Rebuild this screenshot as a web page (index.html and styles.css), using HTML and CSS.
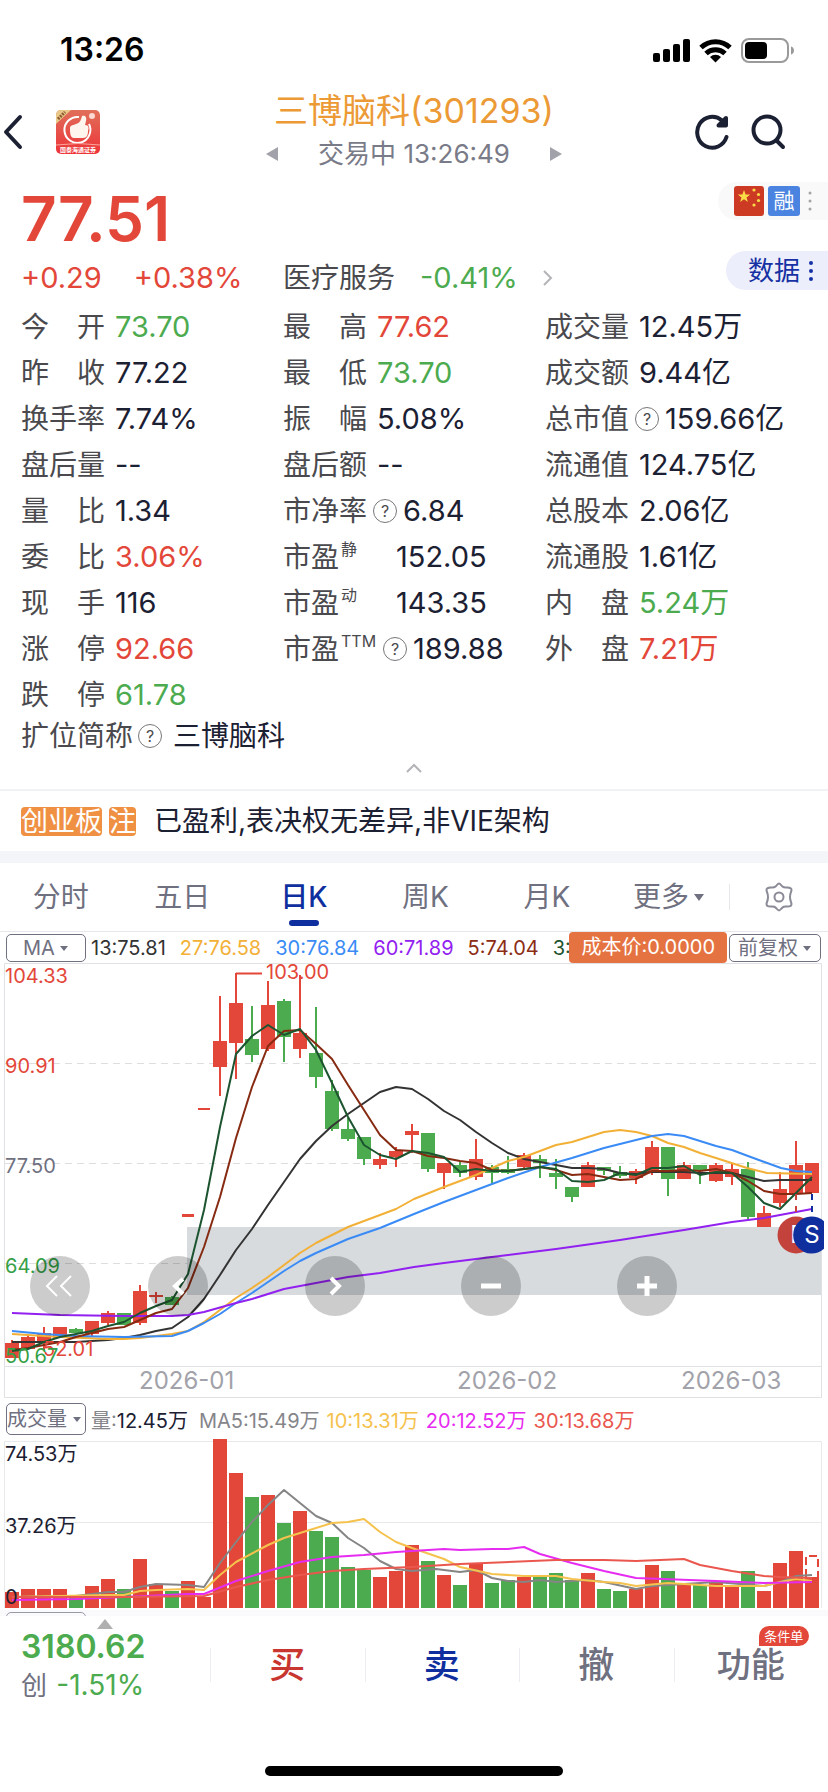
FILE: index.html
```
<!DOCTYPE html>
<html lang="zh-CN">
<head>
    <meta charset="UTF-8">
    <meta name="viewport" content="width=device-width, initial-scale=1.0">
    <title>三博脑科(301293)</title>
    <link rel="stylesheet" href="styles.css">
</head>
<body>
    <div class="status-bar">
        <span class="status-time">13:26</span>
        <svg class="status-icons" width="142" height="28" viewBox="0 0 142 28">
            <rect x="0" y="17" width="7" height="9" rx="2"/>
            <rect x="10" y="13" width="7" height="13" rx="2"/>
            <rect x="20" y="8" width="7" height="18" rx="2"/>
            <rect x="30" y="3" width="7" height="23" rx="2"/>
            <g fill="none" stroke="#000" stroke-width="5">
                <path d="M48 11.500a21 21 0 0 1 29 0"/>
                <path d="M53 17.500a14 14 0 0 1 19 0"/>
            </g>
            <path d="M57 21a8 8 0 0 1 11 0l-5.500 5.500z"/>
            <rect x="89" y="3" width="46" height="23" rx="7" fill="none" stroke="#9a9a9a" stroke-width="2"/>
            <rect x="92" y="6" width="22" height="17" rx="4"/>
            <path d="M138 10.500c4 1 4 7 0 8z" fill="#9a9a9a"/>
        </svg>
    </div>

    <header class="header">
        <div class="header-side">
            <button class="icon-btn" aria-label="返回">
                <svg width="24" height="36" viewBox="0 0 24 36" fill="none" stroke="#1c2033" stroke-width="4" stroke-linecap="round" stroke-linejoin="round"><path d="M20 3 6 18l14 15"/></svg>
            </button>
            <svg class="app-icon" width="44" height="44" viewBox="0 0 44 44">
                <defs>
                    <linearGradient id="appRed" x1="0" y1="0" x2="0" y2="1">
                        <stop offset="0" stop-color="#e0705a"/>
                        <stop offset="1" stop-color="#ee3338"/>
                    </linearGradient>
                    <clipPath id="appClip"><rect width="44" height="44" rx="5"/></clipPath>
                </defs>
                <g clip-path="url(#appClip)">
                    <rect width="44" height="44" fill="url(#appRed)"/>
                    <path d="M0 0h15L0 14z" fill="#e9c888"/>
                    <path d="M2 9 9 2" stroke="#8a5a30" stroke-width="3" stroke-dasharray="2 1"/>
                    <path d="M23 7a13 13 0 1 0 10 7" fill="none" stroke="#fff" stroke-width="2"/>
                    <path d="M14 18c0-3 4-3 6-4 4-1 5-4 6-8 3-1 5 1 4 5l-1 4c4 0 4 3 3 6 0 4-1 7-5 7h-9c-4 0-4-6-4-10z" fill="#fff6ee"/>
                    <circle cx="36" cy="6" r="3" fill="#fbd9d0"/>
                    <path d="M0 35q22-3 44 0" fill="none" stroke="#f9a79c" stroke-width="1"/>
                    <text x="22" y="42" text-anchor="middle" class="app-name">国泰海通证券</text>
                </g>
            </svg>
        </div>
        <div class="header-title">
            <h1>三博脑科(301293)</h1>
            <div class="header-state">
                <button class="icon-btn" aria-label="上一只"><svg width="12" height="14" viewBox="0 0 12 14" fill="#a2a2aa"><path d="M12 0v14L0 7z"/></svg></button>
                <span>交易中 13:26:49</span>
                <button class="icon-btn" aria-label="下一只"><svg width="12" height="14" viewBox="0 0 12 14" fill="#a2a2aa"><path d="M0 0v14l12-7z"/></svg></button>
            </div>
        </div>
        <div class="header-side header-actions">
            <button class="icon-btn" aria-label="刷新">
                <svg width="36" height="38" viewBox="0 0 36 38" fill="none" stroke="#1c2033" stroke-width="4" stroke-linecap="round" stroke-linejoin="round">
                    <path d="M32.500 24A15 15.500 0 1 1 28 7.500"/><path d="M32 5v7.500h-7.500z" fill="#1c2033"/>
                </svg>
            </button>
            <button class="icon-btn" aria-label="搜索">
                <svg width="36" height="38" viewBox="0 0 36 38" fill="none" stroke="#1c2033" stroke-width="4" stroke-linecap="round">
                    <circle cx="17" cy="17" r="13.500"/><path d="m27 28 6 6"/>
                </svg>
            </button>
        </div>
    </header>

    <section class="quote">
        <div class="quote-main">
            <div class="price">77.51</div>
            <div class="change-row">
                <div class="change"><span>+0.29</span><span>+0.38%</span></div>
                <a class="sector" href="#">
                    <span>医疗服务</span>
                    <span class="sector-change down">-0.41%</span>
                    <svg width="10" height="18" viewBox="0 0 10 18" fill="none" stroke="#b4b4b8" stroke-width="2"><path d="m1 2 7 7-7 7"/></svg>
                </a>
            </div>
        </div>
        <div class="quote-side">
            <div class="tag-pill">
                <svg width="30" height="30" viewBox="0 0 30 30">
                    <rect width="30" height="30" rx="3" fill="#cc3a24"/>
                    <g fill="#fbdc46">
                        <path d="m10 4 1.600 4.600h4.600l-3.700 2.800 1.400 4.500-3.900-2.700-3.900 2.700 1.400-4.500-3.700-2.800h4.600z"/>
                        <circle cx="20" cy="4" r="1.600"/><circle cx="24.500" cy="8.500" r="1.600"/><circle cx="24.500" cy="14.500" r="1.600"/><circle cx="20" cy="19" r="1.600"/>
                    </g>
                </svg>
                <span class="tag-rong">融</span>
                <svg width="4" height="22" viewBox="0 0 4 22" fill="#a5a5a8"><circle cx="2" cy="3" r="1.500"/><circle cx="2" cy="11" r="1.500"/><circle cx="2" cy="19" r="1.500"/></svg>
            </div>
            <button class="data-pill">数据
                <svg width="6" height="22" viewBox="0 0 6 22" fill="#1531a3"><circle cx="3" cy="3" r="2"/><circle cx="3" cy="11" r="2"/><circle cx="3" cy="19" r="2"/></svg>
            </button>
        </div>
    </section>

    <dl class="stats">
        <div><dt>今开</dt><dd class="down">73.70</dd></div>
        <div><dt>最高</dt><dd class="up">77.62</dd></div>
        <div><dt>成交量</dt><dd>12.45万</dd></div>

        <div><dt>昨收</dt><dd>77.22</dd></div>
        <div><dt>最低</dt><dd class="down">73.70</dd></div>
        <div><dt>成交额</dt><dd>9.44亿</dd></div>

        <div><dt>换手率</dt><dd>7.74%</dd></div>
        <div><dt>振幅</dt><dd>5.08%</dd></div>
        <div class="tight"><dt>总市值</dt><dd><i class="help">?</i>159.66亿</dd></div>

        <div><dt>盘后量</dt><dd>--</dd></div>
        <div><dt>盘后额</dt><dd>--</dd></div>
        <div><dt>流通值</dt><dd>124.75亿</dd></div>

        <div><dt>量比</dt><dd>1.34</dd></div>
        <div class="tight"><dt>市净率</dt><dd><i class="help">?</i>6.84</dd></div>
        <div><dt>总股本</dt><dd>2.06亿</dd></div>

        <div><dt>委比</dt><dd class="up">3.06%</dd></div>
        <div class="pe"><dt>市盈<sup>静</sup></dt><dd>152.05</dd></div>
        <div><dt>流通股</dt><dd>1.61亿</dd></div>

        <div><dt>现手</dt><dd>116</dd></div>
        <div class="pe"><dt>市盈<sup>动</sup></dt><dd>143.35</dd></div>
        <div><dt>内盘</dt><dd class="down">5.24万</dd></div>

        <div><dt>涨停</dt><dd class="up">92.66</dd></div>
        <div class="tight pe-ttm"><dt>市盈<sup>TTM</sup></dt><dd><i class="help">?</i>189.88</dd></div>
        <div><dt>外盘</dt><dd class="up">7.21万</dd></div>

        <div><dt>跌停</dt><dd class="down">61.78</dd></div>
    </dl>
    <div class="full-name">扩位简称<i class="help">?</i><span>三博脑科</span></div>
    <button class="collapse" aria-label="收起">
        <svg width="16" height="10" viewBox="0 0 16 10" fill="none" stroke="#b4b4b8" stroke-width="2"><path d="m1 9 7-7 7 7"/></svg>
    </button>

    <div class="notice">
        <span class="notice-tag">创业板</span>
        <span class="notice-tag">注</span>
        <span class="notice-text">已盈利,表决权无差异,非VIE架构</span>
    </div>

    <nav class="tabs">
        <button>分时</button>
        <button>五日</button>
        <button class="active">日K</button>
        <button>周K</button>
        <button>月K</button>
        <button class="more">更多<svg width="10" height="7" viewBox="0 0 10 7" fill="#6f7080"><path d="M0 0h10L5 7z"/></svg></button>
        <button class="tab-settings" aria-label="设置">
            <svg width="32" height="32" viewBox="0 0 32 32" fill="none" stroke="#8a8b96" stroke-width="2" stroke-linejoin="round">
                <path d="M12.500 5.500C14 4 15 2.500 16 2.500s2 1.500 3.500 3 3 1 5 1 4 1 4 2.500-1.500 3-1.500 7 1.500 5.500 1.500 7-2 2.500-4 2.500-3.500-.5-5 1-2.500 3-3.500 3-2-1.500-3.500-3-3-1-5-1-4-1-4-2.500S5 20 5 16s-1.500-5.500-1.500-7 2-2.500 4-2.500 3.500.5 5-1z"/>
                <circle cx="16" cy="16" r="4.500"/>
            </svg>
        </button>
    </nav>

    <div class="ma-bar">
        <label class="picker"><select aria-label="主图指标"><option>MA</option></select></label>
        <div class="ma-values">
            <span class="ma13">13:75.81</span>
            <span class="ma27">27:76.58</span>
            <span class="ma30">30:76.84</span>
            <span class="ma60">60:71.89</span>
            <span class="ma5">5:74.04</span>
            <span class="ma3">3:</span>
        </div>
        <span class="cost">成本价:0.0000</span>
        <label class="picker picker-adjust"><select aria-label="复权方式"><option>前复权</option></select></label>
    </div>
    <div class="chart">
        <svg id="kline" viewBox="0 963 828 437"></svg>
        <div class="chart-controls">
            <button class="ctl-first" aria-label="最前"><svg viewBox="0 0 60 60" stroke-width="2"><path d="M27 20 17 30l10 10M41 20 31 30l10 10"/></svg></button>
            <button class="ctl-prev" aria-label="左移"><svg viewBox="0 0 60 60" stroke-width="4"><path d="m35 23-8 7 8 8"/></svg></button>
            <button class="ctl-next" aria-label="右移"><svg viewBox="0 0 60 60" stroke-width="4"><path d="m26 22 8 8-8 8"/></svg></button>
            <button class="ctl-out" aria-label="缩小"><svg viewBox="0 0 60 60" stroke-width="5"><path d="M20 30h20"/></svg></button>
            <button class="ctl-in" aria-label="放大"><svg viewBox="0 0 60 60" stroke-width="5"><path d="M20 30h20M30 20v20"/></svg></button>
        </div>
    </div>

    <div class="vol-bar">
        <label class="picker picker-vol"><select aria-label="副图指标"><option>成交量</option></select></label>
        <div class="vol-values">
            <span class="vol-now"><span>量:</span>12.45万</span>
            <span class="vol5">MA5:15.49万</span>
            <span class="vol10">10:13.31万</span>
            <span class="vol20">20:12.52万</span>
            <span class="vol30">30:13.68万</span>
        </div>
    </div>
    <svg id="volume" viewBox="0 1438 828 172"></svg>
    <div class="next-panel"><div class="next-picker"></div></div>

    <footer class="trade-bar">
        <a class="index" href="#">
            <svg class="index-arrow" width="16" height="10" viewBox="0 0 16 10" fill="#b0b0b0"><path d="M8 0l8 10H0z"/></svg>
            <strong>3180.62</strong>
            <span>创 <em>-1.51%</em></span>
        </a>
        <button class="buy">买</button>
        <button class="sell">卖</button>
        <button class="cancel">撤</button>
        <button class="tools"><span>功能<i class="badge">条件单</i></span></button>
    </footer>
    <div class="home-indicator"></div>

    <script src="chart.js"></script>
</body>
</html>
```
FILE: styles.css
```
* {
    margin: 0;
    padding: 0;
    box-sizing: border-box;
}

:root {
    --up: #e34739;
    --down: #4dab4f;
    --ink: #1c2033;
    --label: #4a4a4e;
    --muted: #6f7080;
    --blue: #0f2f9f;
    --line: #e6e7ea;
    --band: #f4f5f9;
}

body {
    font-family: Inter, "Noto Sans CJK SC", sans-serif;
    font-size: 28px;
    line-height: 46px;
    color: var(--ink);
    background: #fff;
    overflow-x: hidden;
}

button,
select {
    font: inherit;
    color: inherit;
    background: none;
    border: none;
    cursor: pointer;
}

a {
    color: inherit;
    text-decoration: none;
}

i,
em {
    font-style: normal;
}

svg {
    flex: none;
}

.up {
    color: var(--up);
}

.down {
    color: var(--down);
}

.status-bar {
    display: flex;
    justify-content: space-between;
    align-items: center;
    height: 88px;
    padding: 12px 33px 0 60px;
    color: #000;
}

.status-time {
    font-size: 32px;
    font-weight: 600;
}

.header {
    display: flex;
    align-items: center;
    height: 88px;
}

.header-side {
    flex: 1 1 30%;
    display: flex;
    align-items: center;
    gap: 32px;
}

.header-actions {
    justify-content: flex-end;
    gap: 20px;
    padding-right: 42px;
}

.icon-btn {
    display: flex;
}

.app-name {
    font-size: 6px;
    font-weight: 700;
    fill: #fff;
}

.header-title h1 {
    font-size: 34px;
    font-weight: 400;
    line-height: 44px;
    color: #ec9a35;
    text-align: center;
}

.header-state {
    display: flex;
    align-items: center;
    gap: 40px;
    font-size: 26px;
    line-height: 42px;
    color: #7a7b88;
}

.quote {
    display: flex;
    justify-content: space-between;
}

.quote-main {
    flex: 1;
    padding: 14px 0 0 21px;
    margin-right: -110px;
}

.price {
    font-size: 62px;
    font-weight: 600;
    line-height: 58px;
    color: var(--up);
}

.change-row {
    display: flex;
    align-items: center;
    line-height: 48px;
    margin: 6px 0 2px;
}

.change {
    display: flex;
    gap: 32px;
    width: 262px;
    font-size: 29px;
    color: var(--up);
}

.sector {
    display: flex;
    align-items: center;
    gap: 25px;
    color: var(--label);
}

.sector-change {
    font-size: 29px;
}

.quote-side {
    display: flex;
    flex-direction: column;
    align-items: flex-end;
    gap: 31px;
    padding-top: 6px;
}

.tag-pill {
    display: flex;
    align-items: center;
    gap: 4px;
    width: 110px;
    height: 38px;
    padding-left: 16px;
    border-radius: 19px 0 0 19px;
    background: #f9f9fa;
}

.tag-rong {
    width: 32px;
    margin-right: 4px;
    border-radius: 3px;
    background: #4a84e0;
    color: #fff;
    font-size: 21px;
    line-height: 30px;
    text-align: center;
}

.data-pill {
    display: flex;
    align-items: center;
    gap: 8px;
    width: 102px;
    height: 39px;
    padding-left: 22px;
    border-radius: 20px 0 0 20px;
    background: #eceefb;
    color: #1531a3;
    font-size: 26px;
}

.stats {
    display: grid;
    grid-template-columns: 262fr 262fr 283fr;
    padding-left: 21px;
}

.stats div {
    display: flex;
    gap: 10px;
    height: 46px;
    white-space: nowrap;
}

.stats .tight {
    gap: 6px;
}

.stats dt {
    width: 84px;
    color: var(--label);
    text-align-last: justify;
}

.stats .pe dt {
    width: 103px;
    text-align-last: left;
}

.stats .pe-ttm dt {
    width: 94px;
    text-align-last: left;
}

.stats dd {
    display: flex;
    align-items: center;
    font-size: 29px;
}

.stats sup {
    margin-left: 2px;
    font-size: 16px;
    line-height: 16px;
    vertical-align: 12px;
}

.help {
    width: 24px;
    height: 24px;
    margin-right: 6px;
    border: 1px solid #77777c;
    border-radius: 50%;
    color: var(--label);
    font-size: 16px;
    line-height: 22px;
    text-align: center;
}

.full-name {
    display: flex;
    align-items: center;
    gap: 5px;
    padding-left: 21px;
    line-height: 36px;
    color: var(--label);
}

.full-name span {
    color: var(--ink);
}

.collapse {
    display: flex;
    justify-content: center;
    align-items: center;
    width: 100%;
    height: 35px;
    padding-bottom: 8px;
}

.notice {
    display: flex;
    align-items: center;
    gap: 7px;
    height: 74px;
    padding-left: 21px;
    border-top: 2px solid #f1f2f5;
    border-bottom: 12px solid var(--band);
}

.notice-tag {
    border-radius: 4px;
    background: #ef9043;
    color: #fff;
    font-size: 27px;
    line-height: 29px;
}

.notice-text {
    margin-left: 11px;
}

.tabs {
    display: flex;
    height: 69px;
    border-bottom: 1px solid var(--line);
    color: var(--muted);
}

.tabs button {
    position: relative;
    flex: 122;
}

.tabs .active {
    color: var(--blue);
    font-weight: 500;
}

.tabs .active::after {
    content: "";
    position: absolute;
    left: 50%;
    bottom: 5px;
    width: 30px;
    height: 6px;
    margin-left: -15px;
    border-radius: 3px;
    background: var(--blue);
}

.tabs .more {
    display: flex;
    justify-content: center;
    align-items: center;
    gap: 5px;
}

.tabs .tab-settings {
    display: flex;
    flex: 99;
    justify-content: center;
    align-items: center;
    background: linear-gradient(var(--line), var(--line)) no-repeat 0 center / 1px 26px;
}

.ma-bar {
    display: flex;
    align-items: center;
    height: 31px;
    padding: 0 7px 0 6px;
    font-size: 20px;
    line-height: 28px;
}

.picker {
    position: relative;
    flex: none;
    width: 80px;
    height: 28px;
    border: 1px solid var(--muted);
    border-radius: 5px;
    color: var(--muted);
    font-size: 20px;
    line-height: 26px;
}

.picker select {
    appearance: none;
    display: block;
    width: 100%;
    height: 100%;
    padding-left: 16px;
}

.picker::after {
    content: "";
    position: absolute;
    right: 17px;
    top: 11px;
    border: 4px solid transparent;
    border-top: 5px solid var(--muted);
    border-bottom: 0;
    pointer-events: none;
}

.picker-adjust {
    width: 92px;
    margin-left: 2px;
}

.picker-adjust select {
    padding-left: 8px;
}

.picker-adjust::after {
    right: 9px;
}

.picker-vol {
    height: 32px;
    margin-right: 5px;
}

.picker-vol select {
    padding-left: 0;
}

.picker-vol::after {
    right: 4px;
    top: 13px;
}

.ma-values {
    display: flex;
    flex: 1;
    gap: 14px;
    min-width: 0;
    padding-left: 5px;
    white-space: nowrap;
}

.ma13 { color: #333; }
.ma27 { color: #f2b037; }
.ma30 { color: #3a8bf5; }
.ma60 { color: #9220f0; }
.ma5 { color: #8b2d14; }
.ma3 { color: #1d5430; }

.cost {
    flex: none;
    padding: 0 12px;
    border-radius: 4px;
    background: #e57341;
    color: #fff;
    line-height: 31px;
}

.chart {
    position: relative;
}

.chart > svg,
#volume {
    display: block;
    width: 100%;
}

/* each control is centred on its own spot of the chart width */
.chart-controls button {
    position: absolute;
    top: 67%;
    width: 60px;
    height: 60px;
    border-radius: 50%;
    background: rgba(0, 0, 0, 0.2);
    transform: translateX(-50%);
}

.chart-controls svg {
    display: block;
    fill: none;
    stroke: #fff;
}

.ctl-first { left: 7.2%; }
.ctl-prev { left: 21.5%; }
.ctl-next { left: 40.5%; }
.ctl-out { left: 59.3%; }
.ctl-in { left: 78.2%; }

.vol-bar {
    display: flex;
    align-items: center;
    height: 38px;
    padding-left: 6px;
    font-size: 20px;
    line-height: 28px;
    white-space: nowrap;
}

.vol-values {
    display: flex;
    gap: 7px;
    padding-top: 4px;
}

.vol-now {
    margin-right: 4px;
}

.vol-now span,
.vol5 { color: #85858a; }
.vol10 { color: #f5c24d; }
.vol20 { color: #e62cf0; }
.vol30 { color: #ea574e; }

.chart text,
#volume text {
    font-size: 20px;
}

.chart .date {
    font-size: 24px;
    fill: #a2a2aa;
}

.chart .mark {
    font-size: 24px;
    fill: #fff;
    text-anchor: middle;
}

.next-panel {
    height: 6px;
    padding: 2px 6px 0;
    overflow: hidden;
    background: #fafafd;
}

.next-picker {
    width: 80px;
    height: 28px;
    border: 1px solid #9a9ba8;
    border-radius: 5px;
}

.trade-bar {
    display: flex;
    height: 98px;
    background: #fff;
}

.trade-bar button {
    flex: 1;
    font-size: 36px;
    font-weight: 500;
    background: linear-gradient(#ececf2, #ececf2) no-repeat 0 center / 1px 34px;
}

.index {
    position: relative;
    display: flex;
    flex: none;
    flex-direction: column;
    width: 210px;
    padding: 12px 0 0 21px;
    color: var(--muted);
    font-size: 26px;
    line-height: 38px;
}

.index strong {
    color: var(--down);
    font-size: 32px;
    font-weight: 600;
}

.index em {
    margin-left: 2px;
    color: var(--down);
    font-size: 28px;
}

.index-arrow {
    position: absolute;
    left: 97px;
    top: 3px;
}

.trade-bar .buy { color: #c8362f; }
.trade-bar .sell { color: #0f2f9f; }
.trade-bar .cancel { color: var(--muted); }

.trade-bar .tools {
    color: var(--muted);
    font-size: 34px;
}

.tools span {
    position: relative;
}

.badge {
    position: absolute;
    left: 42px;
    top: -18px;
    width: 50px;
    border-radius: 10px 10px 10px 0;
    background: var(--up);
    color: #fff;
    font-size: 13px;
    font-weight: 400;
    line-height: 20px;
}

.home-indicator {
    width: 36%;
    height: 10px;
    margin: 52px auto 16px;
    border-radius: 5px;
    background: #000;
}
```
FILE: chart.js
```
const UP = '#e34739';
const DOWN = '#4dab4f';
const STEP = 16;
const FIRST_X = 12;

// [rising, body top, body bottom, high, low, volume bar top]
const bars = [
    [1, 1343, 1358, 1340, 1358, 1592], [1, 1337, 1349, 1334, 1349, 1589], [1, 1333, 1341, 1327, 1350, 1589],
    [1, 1327, 1338, 1327, 1338, 1589], [0, 1329, 1333, 1328, 1333, 1598], [1, 1321, 1334, 1321, 1336, 1586],
    [1, 1313, 1323, 1311, 1325, 1579], [0, 1313, 1325, 1313, 1325, 1589], [1, 1291, 1323, 1285, 1325, 1559],
    [1, 1295, 1297, 1292, 1303, 1584], [0, 1297, 1305, 1296, 1305, 1591], [1, 1214, 1217, 1214, 1217, 1581],
    [1, 1108, 1110, 1108, 1110, 1597], [1, 1041, 1067, 996, 1096, 1439], [1, 1003, 1043, 973, 1079, 1473],
    [0, 1039, 1055, 1006, 1062, 1497], [1, 1005, 1049, 981, 1051, 1495], [0, 1001, 1037, 999, 1062, 1523],
    [1, 1033, 1049, 975, 1058, 1511], [0, 1053, 1077, 1007, 1088, 1531], [0, 1091, 1129, 1080, 1131, 1537],
    [0, 1129, 1139, 1118, 1141, 1567], [0, 1137, 1159, 1137, 1165, 1570], [1, 1159, 1165, 1153, 1169, 1577],
    [1, 1151, 1157, 1147, 1167, 1571], [1, 1131, 1135, 1124, 1153, 1545], [0, 1133, 1169, 1133, 1172, 1561],
    [1, 1163, 1173, 1163, 1189, 1575], [0, 1165, 1173, 1162, 1177, 1585], [1, 1159, 1177, 1139, 1180, 1564],
    [0, 1167, 1173, 1165, 1183, 1583], [0, 1169, 1173, 1156, 1174, 1580], [1, 1155, 1167, 1153, 1170, 1577],
    [0, 1159, 1163, 1155, 1178, 1577], [0, 1173, 1177, 1159, 1189, 1573], [0, 1187, 1197, 1187, 1202, 1580],
    [1, 1165, 1187, 1162, 1187, 1573], [0, 1167, 1171, 1167, 1175, 1589], [0, 1172, 1176, 1166, 1178, 1591],
    [1, 1171, 1178, 1169, 1184, 1589], [1, 1147, 1173, 1141, 1175, 1565], [0, 1147, 1179, 1147, 1196, 1571],
    [1, 1165, 1179, 1162, 1179, 1584], [0, 1165, 1171, 1165, 1184, 1585], [1, 1165, 1181, 1163, 1182, 1583],
    [1, 1169, 1177, 1164, 1185, 1585], [0, 1169, 1217, 1162, 1219, 1571], [1, 1213, 1227, 1206, 1227, 1591],
    [1, 1189, 1203, 1172, 1207, 1563], [1, 1165, 1193, 1141, 1200, 1551], [1, 1163, 1193, 1163, 1193, 1577]
];

// one value per bar
const ma3 = [1351, 1349, 1342, 1337, 1334, 1331, 1326, 1322, 1313, 1306, 1300, 1274, 1210, 1127, 1054, 1036, 1025,
    1035, 1029, 1050, 1083, 1117, 1145, 1155, 1159, 1151, 1153, 1157, 1172, 1169, 1171, 1171, 1169, 1167, 1169, 1181,
    1182, 1180, 1173, 1175, 1168, 1168, 1166, 1175, 1172, 1173, 1187, 1203, 1209, 1193, 1177];
const ma5 = [1350, 1348, 1345, 1342, 1337, 1333, 1329, 1327, 1320, 1313, 1309, 1288, 1247, 1197, 1138, 1087, 1046,
    1031, 1030, 1044, 1059, 1085, 1110, 1135, 1150, 1151, 1156, 1158, 1161, 1163, 1170, 1171, 1169, 1167, 1170, 1175,
    1174, 1177, 1180, 1179, 1171, 1171, 1170, 1171, 1169, 1173, 1181, 1191, 1194, 1194, 1193];
const ma13 = [1342, 1342, 1342, 1342, 1342, 1341, 1340, 1338, 1335, 1331, 1328, 1317, 1299, 1275, 1250, 1229, 1205,
    1182, 1159, 1141, 1126, 1114, 1103, 1092, 1087, 1089, 1099, 1111, 1120, 1132, 1143, 1153, 1159, 1162, 1165, 1168,
    1168, 1169, 1173, 1174, 1172, 1172, 1172, 1173, 1173, 1173, 1177, 1181, 1180, 1180, 1180];

// slower lines need fewer points
const ma27 = '12,1334 60,1337 108,1339 124,1339 140,1338 172,1334 188,1331 204,1322 220,1310 236,1298 252,1288 268,1277 284,1265 300,1253 316,1243 332,1235 348,1227 396,1209 414,1199 444,1187 476,1175 492,1168 508,1161 524,1157 556,1145 572,1142 588,1137 604,1132 620,1130 636,1132 652,1136 668,1143 684,1147 700,1153 716,1158 747,1168 767,1173 812,1174';
const ma30 = '12,1331 44,1334 76,1336 124,1337 172,1336 188,1331 204,1323 220,1314 236,1303 252,1293 268,1282 284,1271 300,1261 316,1253 332,1246 348,1239 380,1228 414,1214 444,1202 476,1190 508,1178 540,1167 572,1158 604,1148 636,1140 652,1136 668,1134 684,1136 700,1141 716,1146 732,1150 748,1156 781,1168 796,1171 812,1172';
const ma60 = '12,1313 60,1315 124,1316 172,1316 188,1315 204,1312 236,1303 252,1299 284,1289 316,1283 348,1277 380,1273 414,1267 444,1263 508,1255 556,1249 620,1240 684,1230 732,1222 764,1218 812,1209';

const vol5 = '12,1597 76,1596 92,1594 108,1592 124,1592 140,1587 156,1584 188,1585 204,1587 220,1563 236,1542 252,1522 268,1505 284,1490 300,1503 316,1516 332,1523 348,1538 364,1548 380,1561 396,1569 412,1571 436,1569 460,1572 476,1570 492,1578 508,1581 524,1582 540,1580 556,1582 588,1580 604,1582 636,1589 652,1586 716,1582 764,1586 780,1582 796,1576 812,1575';
const vol10 = '12,1597 108,1595 124,1595 140,1591 156,1590 188,1589 204,1590 220,1575 236,1562 268,1545 284,1538 316,1528 332,1523 348,1522 364,1519 380,1532 396,1542 412,1548 444,1559 460,1567 492,1574 524,1576 556,1576 572,1579 604,1582 620,1583 636,1586 668,1583 716,1586 764,1586 780,1582 796,1579 812,1581';
const vol20 = '12,1600 76,1599 124,1597 188,1594 204,1594 236,1581 268,1571 300,1562 332,1557 364,1555 396,1552 412,1551 444,1549 460,1550 492,1549 508,1549 524,1547 540,1554 572,1563 604,1571 636,1578 716,1581 764,1583 812,1582';
const vol30 = '12,1597 124,1597 204,1596 236,1587 268,1580 300,1575 332,1571 364,1569 412,1567 460,1564 556,1560 604,1560 636,1561 684,1559 700,1565 732,1571 764,1576 780,1577 812,1578';

const xOf = i => FIRST_X + i * STEP;
const rect = (x, y, w, h, fill) => `<rect x="${x}" y="${y}" width="${w}" height="${h}" fill="${fill}"/>`;
const seg = (x1, y1, x2, y2, stroke, extra = '') =>
    `<line x1="${x1}" y1="${y1}" x2="${x2}" y2="${y2}" stroke="${stroke}" ${extra}/>`;
const poly = (points, stroke) =>
    `<polyline points="${points}" fill="none" stroke="${stroke}" stroke-width="2" stroke-linejoin="round"/>`;
const text = (x, y, fill, label) => `<text x="${x}" y="${y}" fill="${fill}">${label}</text>`;
const series = values => values.map((y, i) => `${xOf(i)},${y}`).join(' ');

function drawKline() {
    let out = '';

    // frame and grid
    out += '<path d="M4.500 963.500h817v434h-817zM4.500 1366.500h817" fill="none" stroke="#e0e1e4"/>';
    [1063.5, 1163.5, 1263.5].forEach(y => {
        out += seg(5, y, 821, y, '#dedee0', 'stroke-dasharray="7 5"');
    });
    out += rect(187, 1227, 634, 68, '#d7dbde');

    bars.forEach(([rising, top, bottom, high, low], i) => {
        const color = rising ? UP : DOWN;
        const flat = i === 11 || i === 12;
        out += rect(xOf(i) - 1, high, 2, low - high, color);
        out += rect(xOf(i) - (flat ? 6 : 7), top, flat ? 12 : 14, bottom - top, color);
    });

    out += poly(series(ma13), '#333');
    out += poly(ma27, '#f2b037');
    out += poly(ma30, '#3a8bf5');
    out += poly(ma60, '#9220f0');
    out += poly(series(ma5), '#862a12');
    out += poly(series(ma3), '#1d5430');

    // highest and lowest price
    out += seg(236, 973.5, 262, 973.5, UP, 'stroke-width="2"');
    out += text(266, 979, UP, '103.00');
    out += text(43, 1356, UP, '52.01');

    // buy and sell marks
    out += seg(796, 1194, 796, 1216, '#c8433c', 'stroke-width="2" stroke-dasharray="6 6"');
    out += seg(812, 1194, 812, 1216, '#0f2f9f', 'stroke-width="2" stroke-dasharray="6 6"');
    out += '<circle cx="796" cy="1235" r="18.500" fill="#c4423c"/><text class="mark" x="798" y="1243">B</text>';
    out += '<path d="M824 1221.200a18.500 18.500 0 1 0 0 27.600z" fill="#0f2f9f"/><text class="mark" x="812" y="1243">S</text>';

    out += text(5, 983, UP, '104.33');
    out += text(5, 1073, UP, '90.91');
    out += text(5, 1173, '#6f7080', '77.50');
    out += text(5, 1273, '#35a046', '64.09');
    out += text(5, 1363, '#35a046', '50.67');

    [[139, '2026-01'], [457, '2026-02'], [681, '2026-03']].forEach(([x, label]) => {
        out += `<text class="date" x="${x}" y="1389">${label}</text>`;
    });

    document.getElementById('kline').innerHTML = out;
}

function drawVolume() {
    const base = 1608;
    let out = '<path d="M4.500 1608V1441.500h817V1608M4.500 1522.500h817" fill="none" stroke="#e8e9eb"/>';

    bars.forEach(([rising, , , , , top], i) => {
        out += rect(xOf(i) - 7, top, 14, base - top, rising ? UP : DOWN);
    });
    // projected volume of the day
    out += `<path d="M806 1577v-21h12v21" fill="#fff" stroke="${UP}" stroke-width="2" stroke-dasharray="8 4"/>`;

    out += poly(vol5, '#858585');
    out += poly(vol10, '#f5c24d');
    out += poly(vol20, '#e62cf0');
    out += poly(vol30, '#ea574e');

    out += text(5, 1461, '#1c2033', '74.53万');
    out += text(5, 1533, '#1c2033', '37.26万');
    out += text(5, 1604, '#1c2033', '0');

    document.getElementById('volume').innerHTML = out;
}

drawKline();
drawVolume();
```
